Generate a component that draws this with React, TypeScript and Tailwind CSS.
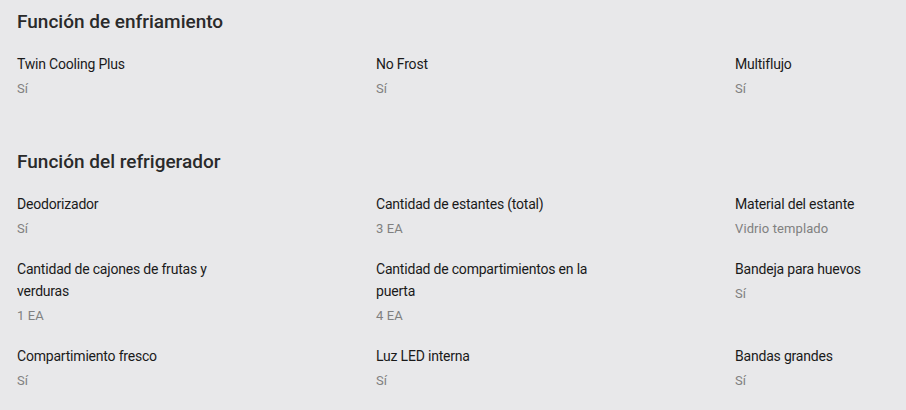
const sections = [
  {
    title: "Función de enfriamiento",
    specs: [
      { label: "Twin Cooling Plus", value: "Sí" },
      { label: "No Frost", value: "Sí" },
      { label: "Multiflujo", value: "Sí" },
    ],
  },
  {
    title: "Función del refrigerador",
    specs: [
      { label: "Deodorizador", value: "Sí" },
      { label: "Cantidad de estantes (total)", value: "3 EA" },
      { label: "Material del estante", value: "Vidrio templado" },
      { label: "Cantidad de cajones de frutas y verduras", value: "1 EA" },
      { label: "Cantidad de compartimientos en la puerta", value: "4 EA" },
      { label: "Bandeja para huevos", value: "Sí" },
      { label: "Compartimiento fresco", value: "Sí" },
      { label: "Luz LED interna", value: "Sí" },
      { label: "Bandas grandes", value: "Sí" },
    ],
  },
]

function Spec({ label, value }: { label: string; value: string }) {
  return (
    <div className="flex flex-col">
      <p className="max-w-[220px] text-[14px] leading-[22px] tracking-[-0.2px] text-[#1a1a1a]">
        {label}
      </p>
      <p className="mt-[3px] text-[13px] leading-[22px] tracking-[0.1px] text-[#808080]">{value}</p>
    </div>
  )
}

export default function App() {
  return (
    <div
      className="w-[906px] h-[410px] overflow-hidden bg-[#e8e8ea] pl-[17px] pt-[9px] flex flex-col gap-[49px]"
      style={{ fontFamily: "Roboto, 'Noto Sans', sans-serif" }}
    >
      {sections.map((section) => (
        <section key={section.title} className="flex flex-col gap-[18px]">
          <h2 className="text-[19px] leading-[26px] font-medium text-[#2a2a2a]">
            {section.title}
          </h2>
          <div className="grid grid-cols-[359px_359px_359px] gap-y-[18px]">
            {section.specs.map((spec) => (
              <Spec key={spec.label} {...spec} />
            ))}
          </div>
        </section>
      ))}
    </div>
  )
}
